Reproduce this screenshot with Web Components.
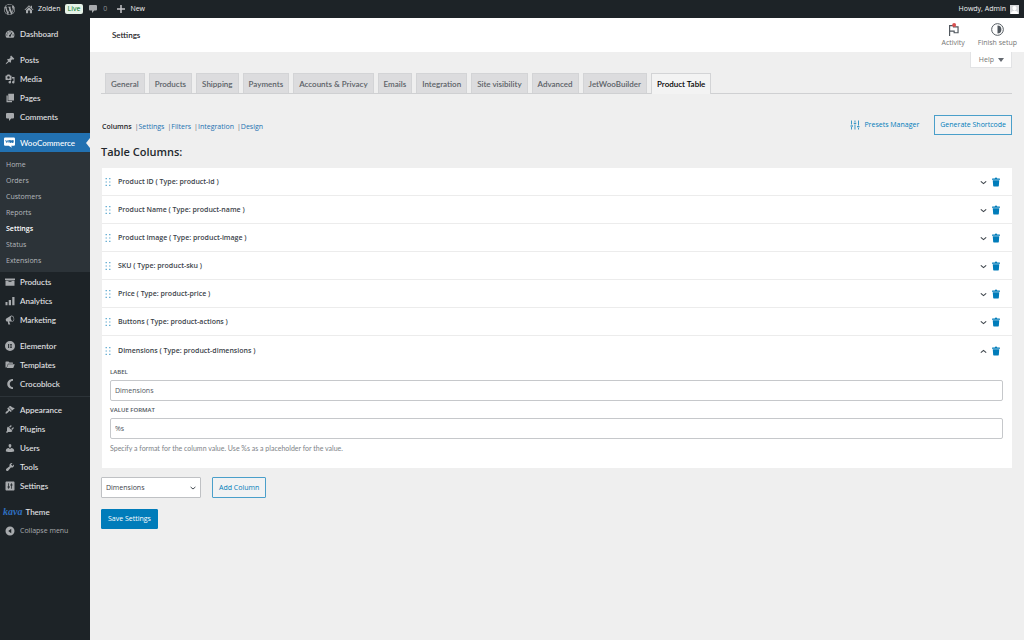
<!DOCTYPE html>
<html lang="en">
<head>
<meta charset="utf-8">
<title>Settings – Product Table</title>
<style>
  :root {
    --ink: #1d2327;
    --page: #efefef;
    --link: #2271b1;
    --accent: #007cba;
    --line: #cfd0d2;
    --label-font: Lato, "Open Sans", sans-serif;
  }
  body {
    margin: 0;
    background: var(--page);
    color: #3c434a;
    font: 7px/10px "Open Sans", "Noto Sans", sans-serif;
  }
</style>
</head>
<body>
<admin-app>
  <admin-bar slot="bar"></admin-bar>
  <admin-menu slot="menu">
    <menu-item icon="dashboard">Dashboard</menu-item>
    <menu-item icon="pin" gap>Posts</menu-item>
    <menu-item icon="media">Media</menu-item>
    <menu-item icon="pages">Pages</menu-item>
    <menu-item icon="comment">Comments</menu-item>
    <menu-item icon="woo" gap current>WooCommerce</menu-item>
    <sub-menu current="Settings" items="Home,Orders,Customers,Reports,Settings,Status,Extensions"></sub-menu>
    <menu-item icon="archive">Products</menu-item>
    <menu-item icon="bars">Analytics</menu-item>
    <menu-item icon="megaphone">Marketing</menu-item>
    <menu-item icon="elementor" gap>Elementor</menu-item>
    <menu-item icon="folder">Templates</menu-item>
    <menu-item icon="croco">Crocoblock</menu-item>
    <menu-item icon="brush" gap ruled>Appearance</menu-item>
    <menu-item icon="plug">Plugins</menu-item>
    <menu-item icon="user">Users</menu-item>
    <menu-item icon="wrench">Tools</menu-item>
    <menu-item icon="settings">Settings</menu-item>
    <menu-item logo="kava" gap>Theme</menu-item>
    <menu-item icon="collapse" muted>Collapse menu</menu-item>
  </admin-menu>
  <page-header slot="header">Settings</page-header>
  <nav-tabs current="Product Table" items="General,Products,Shipping,Payments,Accounts &amp; Privacy,Emails,Integration,Site visibility,Advanced,JetWooBuilder,Product Table"></nav-tabs>
  <section-bar current="Columns" items="Columns,Settings,Filters,Integration,Design"></section-bar>
  <column-list heading="Table Columns:">
    <column-item type="product-id">Product ID</column-item>
    <column-item type="product-name">Product Name</column-item>
    <column-item type="product-image">Product Image</column-item>
    <column-item type="product-sku">SKU</column-item>
    <column-item type="product-price">Price</column-item>
    <column-item type="product-actions">Buttons</column-item>
    <column-item type="product-dimensions" open>Dimensions
      <text-field slot="fields" label="Label" value="Dimensions"></text-field>
      <text-field slot="fields" label="Value format" value="%s" hint="Specify a format for the column value. Use %s as a placeholder for the value."></text-field>
    </column-item>
  </column-list>
  <form-actions></form-actions>
</admin-app>

<script>
const ICONS = {
  wordpress: '<path d="M20 10c0-5.51-4.49-10-10-10C4.48 0 0 4.49 0 10c0 5.52 4.48 10 10 10 5.51 0 10-4.48 10-10zM7.78 15.37L4.37 6.22c.55-.02 1.17-.08 1.17-.08.5-.06.44-1.13-.06-1.11 0 0-1.45.11-2.37.11-.18 0-.37 0-.58-.01C4.12 2.69 6.87 1.11 10 1.11c2.33 0 4.45.87 6.05 2.34-.68-.11-1.65.39-1.65 1.58 0 .74.45 1.36.9 2.1.35.61.55 1.36.55 2.46 0 1.49-1.4 5-1.4 5l-3.03-8.37c.54-.02.82-.17.82-.17.5-.05.44-1.25-.06-1.22 0 0-1.44.12-2.38.12-.87 0-2.33-.12-2.33-.12-.5-.03-.56 1.2-.06 1.22l.92.08 1.26 3.41zM17.41 10c.24-.64.74-1.87.43-4.25.7 1.29 1.05 2.71 1.05 4.25 0 3.29-1.73 6.24-4.4 7.78.97-2.59 1.94-5.2 2.92-7.78zM6.1 18.09C3.12 16.65 1.11 13.53 1.11 10c0-1.3.23-2.48.72-3.59C3.25 10.3 4.67 14.2 6.1 18.09zm4.03-6.63l2.58 6.98c-.86.29-1.76.45-2.71.45-.79 0-1.57-.11-2.29-.33.81-2.38 1.62-4.74 2.42-7.1z"/>',
  home: '<path d="M16 8.500l3 3-1.200 1.200L10 4.800l-7.800 7.900L1 11.500 10 2.300l3.500 3.500V3.500H16zM10 6.500l6 6V18.500h-4.200V13H8.200v5.500H4v-6z"/>',
  comment: '<path d="M4 2h12q2 0 2 2v7q0 2-2 2h-3.500L8 18v-5H4q-2 0-2-2V4q0-2 2-2z"/>',
  plus: '<path d="M18 8.500v3h-6.500V18h-3v-6.500H2v-3h6.500V2h3v6.500z"/>',
  dashboard: '<path fill-rule="evenodd" d="M3 17.500h14A9 9 0 0019 12c0-5-4-9-9-9s-9 4-9 9c0 2.100.8 4 2 5.500zM9 4.500h2v2H9zM4.500 6.800h2v2h-2zM13.500 6.500l1.200.9-3 5.300a1.900 1.900 0 11-1.700-1zM2.800 11h2v2h-2zM15.200 11h2v2h-2z"/>',
  pin: '<path d="M10.440 3.020l1.820-1.820 6.360 6.350-1.830 1.820c-1.050-.68-2.480-.57-3.410.36l-.75.75c-.92.93-1.040 2.350-.35 3.410l-1.830 1.820-2.410-2.410-2.800 2.790c-.42.42-3.380 2.710-3.800 2.290s1.860-3.390 2.280-3.810l2.790-2.790L4.100 9.360l1.830-1.820c1.050.69 2.480.57 3.400-.36l.75-.75c.93-.92 1.050-2.350.36-3.410z"/>',
  media: '<path fill-rule="evenodd" d="M13 11V4c0-.55-.45-1-1-1h-1.670L9 1H5L3.670 3H2c-.55 0-1 .45-1 1v7c0 .55.45 1 1 1h10c.55 0 1-.45 1-1zM7 4.500a2.500 2.500 0 110 5 2.500 2.500 0 010-5zM14 6h5v10.500a2.500 2.500 0 11-2-2.450V9h-3V6zm-4 8.050V13h2v3.500a2.500 2.500 0 11-2-2.450z"/>',
  pages: '<path d="M6.500 15V1.500H18V15zM5.500 16H14v2.500H3V5h2.500z"/>',
  woo: '<path fill-rule="evenodd" d="M2 1h16q2 0 2 2v11q0 2-2 2h-5l1.500 3.500L8.500 16H2q-2 0-2-2V3q0-2 2-2zM2.500 5.500l1.500 5h1l1-3 1 3h1l1.200-4 .3 2.500q.5 2 2 2t2-1.500q.5 1.500 2 1.500 2.200 0 2.200-2.800T16.200 5.500q-1.400 0-2 1.400-.5-1.400-1.700-1.400-1.300 0-1.700 1.200l-.3-1.200H8.200l-.9 3-.9-2.500H5.500l-.9 2.500-.8-3z"/>',
  archive: '<path d="M20 3v3H0V3h20zM1 7h18v10.500H1V7zm12 3V8.500H7V10h6z" fill-rule="evenodd"/>',
  bars: '<path d="M1 12h4v6.500H1zM7.500 8H12v10.500H7.500zM14.500 2H19v16.500h-4.500z"/>',
  megaphone: '<path d="M18.150 5.940c.46 1.620.38 3.220-.02 4.480-.42 1.280-1.260 2.180-2.300 2.480-.16.060-.26.060-.4.060-.06.020-.12.020-.18.020-.06.020-.14.020-.22.020h-6.800l2.220 5.500c.02.140-.06.260-.14.340-.08.100-.24.160-.34.160H6.950c-.1 0-.26-.06-.34-.16-.08-.08-.16-.2-.14-.34l-1-5.500H4.250l-.02-.02c-.5.060-1.080-.18-1.540-.62s-.88-1.080-1.060-1.880c-.24-.8-.2-1.560-.02-2.200.18-.62.580-1.080 1.060-1.300l.02-.02 9-5.400c.1-.06.180-.1.240-.16.060-.04.140-.08.240-.12.160-.08.280-.12.500-.18 1.040-.3 2.240.1 3.220.98s1.840 2.240 2.260 3.860zm-2.580 5.980c.4-.12.740-.34 1.020-.7.920-1.300 1-3.400.42-5.200-.62-2-2.300-3.500-3.700-3.300-1.500.4-2.200 2.600-1.500 5.200.6 2.700 2.300 4.300 3.760 4z" fill-rule="evenodd"/>',
  elementor: '<path fill-rule="evenodd" d="M10 0a10 10 0 110 20 10 10 0 010-20zM6 5.800v8.400h1.700V5.800zm3.500 0v1.700H14V5.800zm0 3.400v1.600H14V9.200zm0 3.300v1.700H14v-1.700z"/>',
  folder: '<path d="M1 15V4q0-1 1-1h5l2 2h6q1 0 1 1v1.500H6L3 15zM6.500 8.500H19.500L16.500 16H3.500z"/>',
  croco: '<path d="M16 0C9 0 4.500 4.500 4.500 10S9 20 16 20v-3.500C12.500 16 9.500 13.500 9.500 10S12.500 4 16 3.500z"/>',
  brush: '<path d="M14.480 11.060L7.410 3.990l1.500-1.500c.5-.56 2.300-.47 3.510.32 1.210.8 1.430 1.280 2.910 2.100 1.180.64 2.450 1.260 4.450.85zm-.71.71L6.700 4.700 4.930 6.470c-.39.39-.39 1.020 0 1.410l1.060 1.060c.39.39.39 1.030 0 1.420-.6.6-1.430 1.110-2.210 1.690-.35.26-.7.53-1.010.84C1.430 14.230.4 16.080 1.400 17.070c.99 1 2.840-.03 4.180-1.360.31-.31.58-.66.85-1.020.57-.78 1.080-1.610 1.690-2.210.39-.39 1.020-.39 1.410 0l1.060 1.060c.39.39 1.020.39 1.410 0z"/>',
  plug: '<path d="M13.110 4.360L9.870 7.600 8 5.730l3.240-3.240c.35-.34 1.050-.2 1.560.32.52.51.66 1.210.31 1.550zm-8 1.770l.91-1.120 9.010 9.010-1.190.84c-.71.71-2.630 1.160-3.820 1.160H6.140L4.900 17.260c-.59.59-1.540.59-2.120 0-.59-.58-.59-1.530 0-2.120l1.240-1.240v-3.880c0-1.130.4-3.190 1.090-3.890zm7.260 3.970l3.240-3.240c.34-.35 1.040-.21 1.550.31.52.51.66 1.210.31 1.550l-3.240 3.250z"/>',
  user: '<path d="M10 9.250c-2.270 0-2.730-3.440-2.730-3.440C7 4.020 7.820 2 9.970 2c2.160 0 2.980 2.020 2.710 3.810 0 0-.41 3.440-2.680 3.440zm0 2.570L12.720 10c2.890 0 5.520 2.330 5.520 4.530v2.490s-4.150 1.130-8.240 1.130c-4.150 0-8.240-1.130-8.240-1.130v-2.490c0-2.250 2.440-4.480 5.470-4.480z"/>',
  wrench: '<path d="M16.680 9.770c-1.340 1.340-3.300 1.670-4.950.99l-5.410 6.520c-.99.99-2.590.99-3.580 0s-.99-2.590 0-3.570l6.520-5.420c-.68-1.650-.35-3.610.99-4.950 1.280-1.280 3.120-1.620 4.720-1.060l-2.890 2.890 2.820 2.820 2.860-2.870c.53 1.580.18 3.390-1.080 4.650z"/>',
  settings: '<path fill-rule="evenodd" d="M19 17V3c0-1.100-.9-2-2-2H3c-1.100 0-2 .9-2 2v14c0 1.100.9 2 2 2h14c1.100 0 2-.9 2-2zM8 11h2v2H8v2.500H6.500V13H5v-2h1.500V4.500H8zm5.500-2v6.500H12V9h-1.500V7H12V4.500h1.500V7H15v2z"/>',
  collapse: '<path fill-rule="evenodd" d="M10 1a9 9 0 110 18 9 9 0 010-18zM12.500 5.500L6.500 10l6 4.500z"/>',
  trash: '<path fill-rule="evenodd" d="M12.500 3H17q1 0 1 1v1.500H2V4q0-1 1-1h4.500Q8 1 10 1t2.500 2zM3.500 6.500h13l-.9 11.600c0 .5-.5.900-1 .9H5.400c-.5 0-.9-.4-1-.9z"/>',
  down: '<path d="M4 7.500l6 5 6-5" fill="none" stroke="currentColor" stroke-width="2.400"/>',
  up: '<path d="M4 12.500l6-5 6 5" fill="none" stroke="currentColor" stroke-width="2.400"/>',
  grip: '<path d="M4 0h3v3H4zM13 0h3v3h-3zM4 8.500h3v3H4zM13 8.500h3v3h-3zM4 17h3v3H4zM13 17h3v3h-3z"/>',
  sliders: '<path d="M2.500 1H4v8H2.500zM1 11h5v2H1zM2.500 14H4v5H2.500zM9.200 1h1.500v3H9.200zM7.500 5.500h5v2h-5zM9.200 9h1.500v10H9.200zM16 1h1.500v10H16zM14 12.500h5v2h-5zM16 16h1.500v3H16z"/>',
  flag: '<path d="M4 20V4h6v2h7v9h-6v-2.500H4" fill="none" stroke="currentColor" stroke-width="1.800"/><circle cx="11" cy="3" r="3" fill="#d94f4f"/>',
  half: '<circle cx="10" cy="10" r="9" fill="none" stroke="currentColor" stroke-width="1.500"/><path d="M10 4a6 6 0 010 12z"/>',
  avatar: '<path fill="#d5d7da" d="M0 0h20v20H0z"/><path fill="#fff" d="M10 2c3 0 4.500 2 4.500 4.800S12.800 12 10 12 5.500 9.600 5.500 6.800 7 2 10 2zM2 20c0-5 3.500-7 8-7s8 2 8 7z"/>'
};

const define = (name, css, render) => customElements.define(name, class extends HTMLElement {
  connectedCallback() {
    if (this.shadowRoot) return;
    this.attachShadow({ mode: 'open' }).innerHTML =
      `<style>*{box-sizing:border-box}a{color:inherit;text-decoration:none}${css}</style>${render(this)}`;
  }
});
const list = (el) => el.getAttribute('items').split(',');
const esc = (s) => s.replace(/&/g, '&amp;');

define('ui-icon', `
  :host{display:block;flex:none;width:var(--icon-size,11px);height:var(--icon-size,11px)}
  svg{display:block;width:100%;height:100%;fill:currentColor;overflow:visible}`,
  el => `<svg viewBox="0 0 20 20" aria-hidden="true">${ICONS[el.getAttribute('name')]}</svg>`);

define('admin-app', `
  :host{display:grid;grid-template:auto auto 1fr / 90px minmax(0,1fr);min-height:100vh}
  .bar{grid-column:1/3}
  .menu{grid-row:2/4;background:var(--ink)}
  main{padding:6px 12px 24px 11px}`,
  () => `<div class="bar"><slot name="bar"></slot></div>
    <div class="menu"><slot name="menu"></slot></div>
    <div><slot name="header"></slot></div>
    <main><slot></slot></main>`);

define('admin-bar', `
  :host{display:flex;align-items:center;height:18px;padding:0 5px 0 4px;background:var(--ink);color:#f0f0f1;font-weight:500}
  a{display:flex;align-items:center;gap:4px}
  nav{display:flex;align-items:center;flex:1}
  ui-icon{color:#a7aaad}
  .site{margin-left:9px;--icon-size:10px}
  .live{margin-left:4px;padding:0 3px;border-radius:2px;background:#e6f2e8;color:#00721e}
  .notes{gap:5px;margin-left:5px;--icon-size:10px;color:#8c9196}
  .new{margin-left:9px;--icon-size:10px}
  .new ui-icon{color:#c3c4c7}
  .me{--icon-size:9px}`,
  () => `<nav aria-label="Toolbar">
      <a href="#" aria-label="About WordPress"><ui-icon name="wordpress"></ui-icon></a>
      <a class="site" href="#"><ui-icon name="home"></ui-icon>Zolden</a>
      <a class="live" href="#">Live</a>
      <a class="notes" href="#"><ui-icon name="comment"></ui-icon>0</a>
      <a class="new" href="#"><ui-icon name="plus"></ui-icon>New</a>
    </nav>
    <a class="me" href="#">Howdy, Admin<ui-icon name="avatar"></ui-icon></a>`);

define('admin-menu', `:host{display:block;padding-top:6px}`, () => `<nav aria-label="Main menu"><slot></slot></nav>`);

define('menu-item', `
  :host{display:block;color:#e4e5e7;font:500 8px/10px var(--label-font)}
  :host([gap]){padding-top:7px}
  :host([ruled]){padding-top:3px;margin-top:3px;border-top:1px solid #2c3338}
  :host([muted]){color:#a7aaad;font:inherit}
  a{position:relative;display:flex;align-items:center;gap:5px;height:19px;padding-left:5px;--icon-size:10px}
  ui-icon{color:#a7aaad}
  :host([current]) a{padding-left:4px;background:var(--link);color:#fff;--icon-size:11px}
  :host([current]) ui-icon{color:#fff}
  :host([current]) a::after{content:"";position:absolute;right:0;top:5px;border:solid transparent;border-width:5px 4px 5px 0;border-right-color:var(--page)}
  :host([logo]) a{padding-left:3px;gap:3px}
  i{font:italic bold 10px/10px "Liberation Serif",serif;color:#2f6fc0}`,
  el => `<a href="#">${el.hasAttribute('logo') ? `<i>${el.getAttribute('logo')}</i>` : `<ui-icon name="${el.getAttribute('icon')}"></ui-icon>`}<span><slot></slot></span></a>`);

define('sub-menu', `
  :host{display:block;padding:5px 0 3px;background:#2c3338;color:#b4b8bc}
  a{display:block;padding:3px 6px}
  [aria-current]{color:#fff;font-weight:600}`,
  el => list(el).map(t => `<a href="#"${t === el.getAttribute('current') ? ' aria-current="page"' : ''}>${t}</a>`).join(''));

define('page-header', `
  :host{position:relative;display:flex;align-items:center;justify-content:space-between;height:34px;padding:0 7px 0 22px;background:#fff}
  h1{margin:0;font:600 8px/10px var(--label-font);color:var(--ink)}
  .tools{display:flex;gap:13px}
  button{font:inherit;color:#757575;border:0;background:none;padding:0}
  .tools button{display:flex;flex-direction:column;align-items:center;gap:2px;--icon-size:13px}
  .tools ui-icon{color:#50575e}
  .help{position:absolute;top:100%;right:12px;display:flex;gap:4px;align-items:center;height:16px;padding:0 7px 0 8px;background:#fff;border:1px solid #e2e3e5;border-top:0}
  .caret{border:solid transparent;border-width:4px 3px 0;border-top-color:#646970}`,
  () => `<h1><slot></slot></h1>
    <div class="tools"><button><ui-icon name="flag"></ui-icon>Activity</button>
    <button><ui-icon name="half"></ui-icon>Finish setup</button></div>
    <button class="help">Help<span class="caret"></span></button>`);

define('nav-tabs', `
  :host{display:block;padding-top:15px}
  nav{display:flex;gap:4px;padding-left:4px;border-bottom:1px solid var(--line)}
  a{height:20px;padding:5px 5px 0;border:1px solid #d3d4d6;border-bottom:0;background:#dcdcde;color:#5b6167;font:600 8px/10px var(--label-font);white-space:nowrap}
  [aria-current]{height:21px;margin-bottom:-1px;background:#f3f3f3;color:#000}`,
  el => `<nav aria-label="Settings tabs">${list(el).map(t => `<a href="#"${t === el.getAttribute('current') ? ' aria-current="page"' : ''}>${esc(t)}</a>`).join('')}</nav>`);

define('section-bar', `
  :host{display:flex;align-items:center;justify-content:space-between;padding-top:21px}
  ul{display:flex;list-style:none;margin:0;padding:3px 0 0 1px;color:var(--link)}
  li+li::before{content:"|";margin-left:3px;color:#646970}
  [aria-current]{color:#1d2327;font-weight:600}
  .tools{display:flex;align-items:center;gap:15px;color:var(--accent)}
  .presets{display:flex;align-items:center;gap:4px;--icon-size:10px}
  button{font:inherit;color:inherit;background:none;border:0;padding:0}
  .generate{height:20px;padding:0 5px;border:1px solid #4a9fca;background:#f1f2f3}`,
  el => `<ul>${list(el).map(t => `<li><a href="#"${t === el.getAttribute('current') ? ' aria-current="page"' : ''}>${t}</a></li>`).join('')}</ul>
    <div class="tools"><button class="presets"><ui-icon name="sliders"></ui-icon>Presets Manager</button>
    <button class="generate">Generate Shortcode</button></div>`);

define('column-list', `
  :host{display:block;padding-top:10px}
  h2{margin:0 0 9px;font-size:11px;line-height:14px;font-weight:600;color:#23282d}
  .rows{margin-left:1px;background:#fff}`,
  el => `<h2>${el.getAttribute('heading')}</h2><div class="rows"><slot></slot></div>`);

define('column-item', `
  :host{display:block;border-bottom:1px solid #ececec}
  :host([open]){border-bottom:0}
  header{display:flex;align-items:center;height:27px;padding:1px 11px 0 2px;color:#3c434a;font-weight:600}
  :host([open]) header{height:29px}
  h3{flex:1;margin:0 0 0 6px;font:inherit}
  button{padding:0;border:0;background:none;color:inherit}
  .grip{color:#4a9fca;--icon-size:8px}
  .toggle{--icon-size:9px;color:#3c434a}
  .remove{margin-left:3px;--icon-size:10px;color:var(--accent)}
  .fields{padding:2px 9px 15px 8px}`,
  el => `<header><ui-icon class="grip" name="grip"></ui-icon><h3><slot></slot> ( Type: ${el.getAttribute('type')} )</h3>
    <button class="toggle" aria-label="Toggle column"><ui-icon name="${el.hasAttribute('open') ? 'up' : 'down'}"></ui-icon></button>
    <button class="remove" aria-label="Remove column"><ui-icon name="trash"></ui-icon></button></header>
    ${el.hasAttribute('open') ? '<div class="fields"><slot name="fields"></slot></div>' : ''}`);

define('text-field', `
  :host{display:block}
  label{display:block;padding-bottom:3px;font-size:6px;font-weight:600;text-transform:uppercase;color:#50575e}
  input{display:block;width:100%;height:21px;margin-bottom:4px;padding:0 4px;border:1px solid #c6c8cb;border-radius:2px;background:#fff;color:#50575e;font:inherit}
  p{margin:0;font-family:var(--label-font);color:#7d8287}`,
  el => `<label for="f">${el.getAttribute('label')}</label><input id="f" value="${el.getAttribute('value')}">
    ${el.hasAttribute('hint') ? `<p>${el.getAttribute('hint')}</p>` : ''}`);

define('form-actions', `
  :host{display:block;padding-top:9px}
  .add{display:flex;gap:11px;margin-bottom:11px}
  .pick{position:relative;width:100px;--icon-size:8px}
  .pick ui-icon{position:absolute;right:4px;top:7px;pointer-events:none}
  select{appearance:none;width:100%;height:21px;padding:0 4px;border:1px solid #bfc1c4;border-radius:1px;background:#fff;color:#3c434a;font:inherit}
  button{height:21px;padding:0 6px;font:inherit;border:1px solid #4a9fca;border-radius:1px;background:#f1f2f3;color:var(--accent)}
  .save{height:20px;border-color:var(--accent);background:var(--accent);color:#fff}`,
  () => `<div class="add"><div class="pick"><select aria-label="Column type"><option>Dimensions</option></select><ui-icon name="down"></ui-icon></div>
    <button>Add Column</button></div><button class="save">Save Settings</button>`);
</script>
</body>
</html>
